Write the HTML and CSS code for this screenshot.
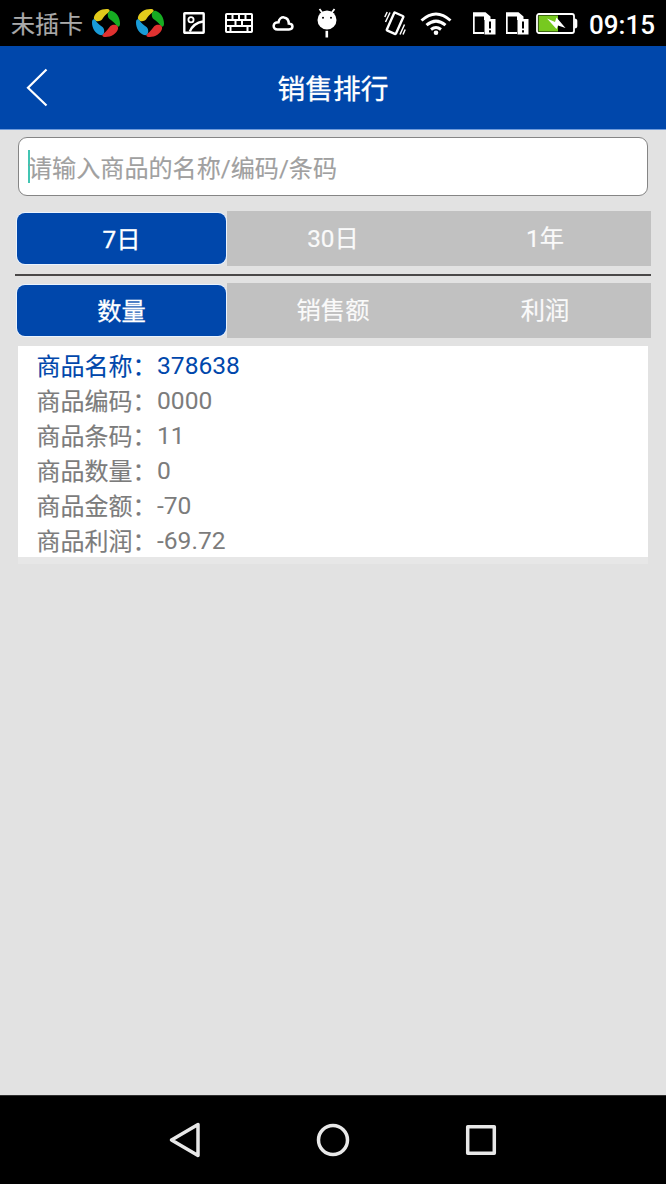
FILE: index.html
```html
<!DOCTYPE html>
<html lang="zh-CN">
<head>
<meta charset="utf-8">
<title>销售排行</title>
<link rel="stylesheet" href="styles.css">
</head>
<body>
<div class="screen">
  <div class="status">
    <span class="carrier">未插卡</span>
    <svg class="ic pinwheel" width="30" height="30" viewBox="0 0 30 30">
      <defs><path id="blade" d="M3 9C4.500 4.500 9.500 1 15.500 1 19 1 19.500 3.200 17.500 4.600 14.500 6.500 13.300 8.500 11 11.500 8.500 14.500 1.800 13.500 3 9Z"/></defs>
      <g id="wheel">
        <use href="#blade" fill="#e2cb1b"/>
        <use href="#blade" fill="#16ac22" transform="rotate(90 15 15)"/>
        <use href="#blade" fill="#e03130" transform="rotate(180 15 15)"/>
        <use href="#blade" fill="#199bd7" transform="rotate(270 15 15)"/>
      </g>
    </svg>
    <svg class="ic pinwheel2" width="30" height="30" viewBox="0 0 30 30"><use href="#wheel"/></svg>
    <svg class="ic picture" width="22" height="22" viewBox="0 0 22 22" fill="none" stroke="#fff" stroke-width="2.400"><rect x="1.300" y="1.300" width="19.400" height="19.400" rx=".5"/><circle cx="8" cy="7.700" r="2.600" stroke-width="1.800"/><path d="M6.800 19.500Q10.500 11 20 9.500"/></svg>
    <svg class="ic keyboard" width="28" height="20" viewBox="0 0 28 20" fill="none" stroke="#fff" stroke-width="2"><rect x="1" y="1" width="26" height="18" rx=".8"/><path d="M1 7H27M1 13H27M7.500 1V7M14 1V7M20.500 1V7M10.500 7V13M17 7V13M5.500 13V19M22.500 13V19"/></svg>
    <svg class="ic cloud" width="22" height="17" viewBox="0 0 22 17" fill="none" stroke="#fff" stroke-width="2.500"><path d="M5.500 14.500H17C21.500 14.500 21.800 8.800 16.800 8.500 16.500 .8 7.500 .3 6.500 7.300 .2 7.300 .2 14.500 5.500 14.500Z"/></svg>
    <svg class="ic droid" width="22" height="30" viewBox="0 0 22 30"><path d="M3.500 1 6.500 5M18.500 1 15.500 5" stroke="#fff" stroke-width="1.800"/><circle cx="11" cy="12" r="9.500" fill="#fff"/><path d="M10.800 22.800V29.500" stroke="#fff" stroke-width="2.600"/><circle cx="7" cy="9.800" r="1"/><circle cx="15" cy="9.800" r="1"/></svg>
    <svg class="ic vibrate" width="22" height="25" viewBox="0 0 22 25" fill="none" stroke="#fff"><rect x="6" y="2.500" width="10" height="19.500" rx="1" stroke-width="2.400" transform="rotate(24 11 12.500)"/><path d="M.8 6 3.200 1M1.500 11 6 1.500M20.500 13.500 16 23.500M21.200 18.500 19 23.500" stroke-width="1.500"/></svg>
    <svg class="ic wifi" width="32" height="24" viewBox="0 0 32 24" fill="none" stroke="#fff" stroke-width="3"><path d="M1.500 8.500Q16-4.500 30.500 8.500M6.500 13.200Q16 5 25.500 13.200M11 17.500Q16 13.500 21 17.500"/><circle cx="16" cy="20.800" r="2.300" fill="#fff" stroke="none"/></svg>
    <svg class="ic sim" width="23" height="24" viewBox="0 0 23 24"><g id="card"><path d="M.8 1V21H11" fill="none" stroke="#fff" stroke-width="1.800"/><path d="M0 .3H12.500L17.500 4.500V8H11V4.500H0Z" fill="#fff"/><rect x="11.500" y="7" width="11" height="15.500" fill="#fff"/><path d="M17 9.500V16.500M17 18.200V20.500" stroke="#000" stroke-width="2"/></g></svg>
    <svg class="ic sim2" width="23" height="24" viewBox="0 0 23 24"><use href="#card"/></svg>
    <svg class="ic battery" width="42" height="21" viewBox="0 0 42 21"><rect x="1" y="1" width="37" height="19" rx="2" fill="#000" stroke="#fff" stroke-width="1.800"/><rect x="2.500" y="2.500" width="19.500" height="16" fill="#77c91f"/><path d="M38.500 5.500Q41.300 5.500 41.300 8V13Q41.300 15.500 38.500 15.500Z" fill="#fff"/><path d="M11 5.500 19 9 20.500 4.500 29.500 15 22 12.500 20.500 16Z" fill="#fff"/></svg>
    <span class="clock">09:15</span>
  </div>
  <header class="header">
    <svg class="back" width="24" height="40" viewBox="0 0 24 40" fill="none" stroke="#fff" stroke-width="2.200"><path d="M21.500 1.500 3 19.800 21.500 37.500"/></svg>
    <h1 class="title">销售排行</h1>
  </header>
  <main class="content">
    <div class="search"><span class="caret"></span><span class="hint">请输入商品的名称/编码/条码</span></div>
    <div class="tabs">
      <div class="tab active"><span class="pill">7日</span></div><div class="tab">30日</div><div class="tab">1年</div>
    </div>
    <div class="rule"></div>
    <div class="tabs">
      <div class="tab active"><span class="pill">数量</span></div><div class="tab">销售额</div><div class="tab">利润</div>
    </div>
    <div class="card">
      <div class="row name"><span class="label">商品名称：</span><span>378638</span></div>
      <div class="row"><span class="label">商品编码：</span><span>0000</span></div>
      <div class="row"><span class="label">商品条码：</span><span>11</span></div>
      <div class="row"><span class="label">商品数量：</span><span>0</span></div>
      <div class="row"><span class="label">商品金额：</span><span>-70</span></div>
      <div class="row"><span class="label">商品利润：</span><span>-69.72</span></div>
    </div>
  </main>
  <nav class="nav">
    <svg width="32" height="36" viewBox="0 0 32 36"><path d="M2.500 18 29 2.500V33.500Z"/></svg>
    <svg width="34" height="34" viewBox="0 0 34 34"><circle cx="17" cy="17" r="14.500"/></svg>
    <svg width="32" height="32" viewBox="0 0 32 32"><rect x="2.700" y="2.700" width="26.600" height="26.600"/></svg>
  </nav>
</div>
</body>
</html>
```
FILE: styles.css
```css
* { box-sizing: border-box; }
body { margin: 0; font-family: Roboto, "Noto Sans CJK SC", sans-serif; }
.screen { width: 666px; height: 1184px; display: flex; flex-direction: column; background: #e2e2e2; overflow: hidden; }

.status { height: 46px; background: #000; display: flex; align-items: flex-start; padding-left: 11px; flex: none; }
.status .ic { flex: none; display: block; }
.carrier { width: 72px; flex: none; font-size: 24px; line-height: 50px; color: #aaa; white-space: nowrap; -webkit-text-stroke: .2px #aaa; }
.pinwheel { margin: 8px 0 0 8px; }
.pinwheel2 { margin: 8px 0 0 14px; }
.picture { margin: 12px 0 0 18px; }
.keyboard { margin: 13px 0 0 20px; }
.cloud { margin: 15px 0 0 19px; }
.droid { margin: 8px 0 0 22px; }
.vibrate { margin: 11px 0 0 46px; }
.wifi { margin: 12px 0 0 14px; }
.sim { margin: 12px 0 0 21px; }
.sim2 { margin: 12px 0 0 10px; }
.battery { margin: 13px 0 0 7px; }
.clock { margin-left: 11px; color: #fff; font-size: 26px; font-weight: 500; line-height: 50px; }

.header { height: 84px; flex: none; display: grid; grid-template-columns: 60px 1fr 60px; align-items: start; background: #0047ab; border-bottom: 1px solid #6f9bdb; }
.back { margin: 22px 0 0 25px; }
.title { margin: 0; color: #fff; font-size: 27.7px; font-weight: 400; line-height: 88px; text-align: center; -webkit-text-stroke: .3px #fff; }

.content { flex: 1; padding: 7px 15px 0; }
.search { height: 59px; margin: 0 3px 15px; padding-left: 9px; display: flex; align-items: center; background: #fff; border: 1px solid #858585; border-radius: 9px; }
.caret { width: 2px; height: 33px; margin-right: -2px; background: #43c5b3; }
.hint { color: #a0a0a0; font-size: 24.1px; line-height: 34px; padding-top: 4px; -webkit-text-stroke: .15px #a0a0a0; }

.tabs { height: 55px; display: grid; grid-template-columns: repeat(3, 212px); grid-template-rows: 55px; }
.tab { color: #fafafa; background: #c1c1c1; font-size: 24.3px; line-height: 56px; text-align: center; -webkit-text-stroke: .2px #fafafa; }
.tab.active { padding: 2px 1px 2px 2px; background: #e2e2e2; color: #fff; -webkit-text-stroke: .3px #fff; }
.pill { display: block; height: 51px; line-height: 53px; border-radius: 8px; background: #0047ab; box-shadow: 0 0 0 1px #e9f3ff; }
.rule { height: 2px; margin: 8px 0 7px; background: #4a4848; }

.card { margin: 8px 3px 0; height: 218px; background: #fff; border-bottom: 7px solid #e7e7e7; }
.row { display: flex; height: 35.1px; padding-left: 18.5px; color: #7c7c7c; font-size: 24.6px; line-height: 39px; white-space: nowrap; }
.row .label { width: 120.5px; font-size: 24px; line-height: 42px; -webkit-text-stroke: .15px; }
.row.name { color: #0047ab; }

.nav { height: 89px; flex: none; background: #000; display: flex; align-items: center; justify-content: center; gap: 115px; border-top: 1px solid #303030; }
.nav svg { fill: none; stroke: #e8e8e8; stroke-width: 3.5; stroke-linejoin: round; }
```
